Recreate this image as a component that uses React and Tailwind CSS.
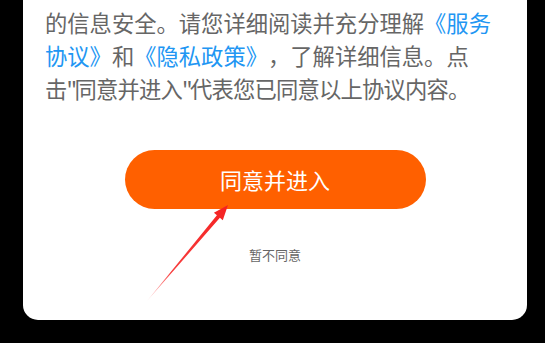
export default function App() {
  const Q = () => <span className="inline-block w-[8px] text-center">"</span>;
  return (
    <div className="w-[545px] h-[343px] bg-black overflow-hidden relative" style={{ fontFamily: '"Noto Sans CJK SC", "Noto Sans", sans-serif' }}>
      <div className="ml-[23px] w-[504px] h-[320px] bg-white rounded-b-[15px] px-[22px] pt-[6px] flex flex-col">
        <div className="text-[22.3px] leading-[33px] text-[#666666] whitespace-nowrap [text-spacing-trim:space-all]">
          <div>的信息安全。请您详细阅读并充分理解<span className="text-[#2196f3]">《服务</span></div>
          <div><span className="text-[#2196f3]">协议》</span>和<span className="text-[#2196f3]">《隐私政策》</span>，了解详细信息。点</div>
          <div className="tracking-[-0.8px]">击<Q />同意并进入<Q />代表您已同意以上协议内容。</div>
        </div>
        <div className="mt-[45px] flex justify-center">
          <div className="w-[301px] h-[59px] rounded-full bg-[#ff6000] flex items-center justify-center text-white text-[22px]">
            同意并进入
          </div>
        </div>
        <div className="mt-[37px] text-center text-[13px] text-[#666666] leading-[18px]">暂不同意</div>
      </div>
      <svg className="absolute left-0 top-0" width="545" height="343" viewBox="0 0 545 343">
        <defs>
          <linearGradient id="ag" x1="147" y1="301" x2="228" y2="205" gradientUnits="userSpaceOnUse">
            <stop offset="0" stopColor="#ff3030" stopOpacity="0.2" />
            <stop offset="0.3" stopColor="#f62828" stopOpacity="0.9" />
            <stop offset="1" stopColor="#f52222" />
          </linearGradient>
        </defs>
        <polygon points="147,301 219.9,217.8 222.8,220.3 228,205 213.9,212.8 216.9,215.3" fill="url(#ag)" />
      </svg>
    </div>
  );
}
